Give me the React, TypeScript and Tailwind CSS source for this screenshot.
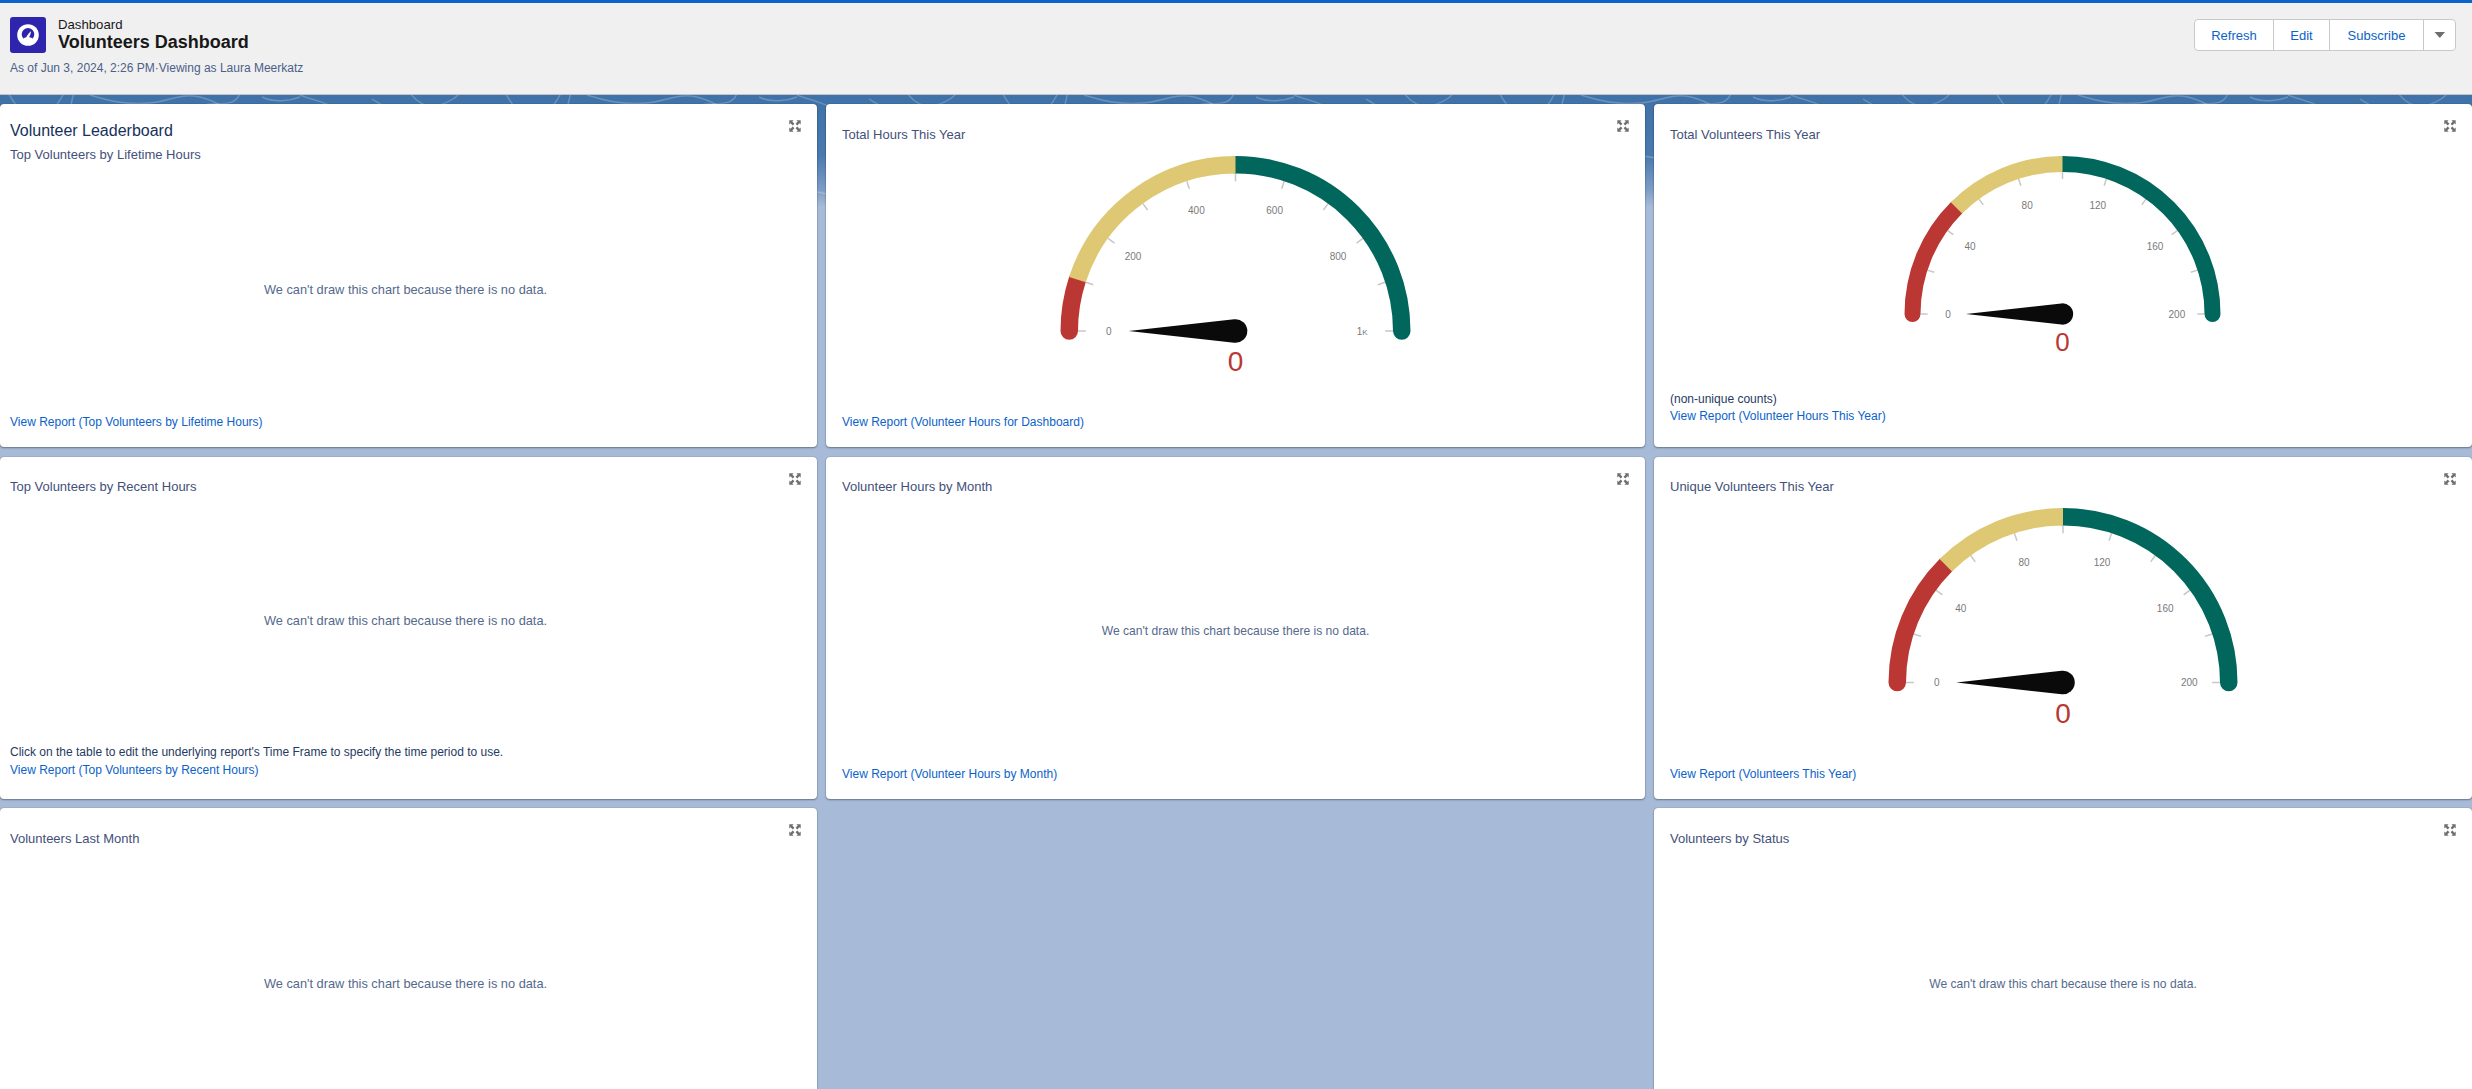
import React from "react";

const font = { fontFamily: '"Liberation Sans", Arial, sans-serif' };

function ExpandIcon() {
  const arrow = "M0.3 0.3H4.6L3.3 1.6L5.4 3.7L3.7 5.4L1.6 3.3L0.3 4.6Z";
  return (
    <svg viewBox="0 0 12 12" className="absolute top-[16px] right-[16px] w-[12px] h-[12px]">
      {[0, 90, 180, 270].map((r) => (
        <path key={r} d={arrow} fill="#6f6f6f" transform={`rotate(${r} 6 6)`} />
      ))}
    </svg>
  );
}

function pt(r: number, frac: number) {
  const a = Math.PI * (1 - frac);
  return [r * Math.cos(a), -r * Math.sin(a)];
}

function arc(r: number, f0: number, f1: number) {
  const [x0, y0] = pt(r, f0);
  const [x1, y1] = pt(r, f1);
  return `M${x0} ${y0}A${r} ${r} 0 0 1 ${x1} ${y1}`;
}

function Gauge({
  R,
  sw,
  split,
  labels,
  cy,
  valueY,
  valueSize,
  className,
}: {
  R: number;
  sw: number;
  split: number;
  labels: React.ReactNode[];
  cy: number;
  valueY: number;
  valueSize: number;
  className: string;
}) {
  const rc = R - sw / 2;
  const ri = R - sw;
  const W = 2 * (R + 12);
  const H = cy + valueY + 20;
  const L = R * 0.611;
  const nr = R * 0.0675;
  const tx = -(nr * nr) / L;
  const ty = nr * Math.sqrt(1 - (nr * nr) / (L * L));
  const tick = R * 0.045;
  return (
    <svg width={W} height={H} viewBox={`${-W / 2 + 0.5} ${-cy} ${W} ${H}`} className={className}>
      {Array.from({ length: 11 }).map((_, i) => {
        const [x0, y0] = pt(ri, i / 10);
        const [x1, y1] = pt(ri - tick, i / 10);
        return <line key={i} x1={x0} y1={y0} x2={x1} y2={y1} stroke="#c9c7c5" strokeWidth={1.5} />;
      })}
      <path d={arc(rc, 0, split)} fill="none" stroke="#ba3733" strokeWidth={sw} strokeLinecap="round" />
      <path d={arc(rc, 0.5, 1)} fill="none" stroke="#01675d" strokeWidth={sw} strokeLinecap="round" />
      <path d={arc(rc, split, 0.5)} fill="none" stroke="#dfc874" strokeWidth={sw} />
      {labels.map((l, i) => {
        const [x, y] = pt(R * 0.724, i / 5);
        return (
          <text key={i} x={x} y={y + 3.5} textAnchor="middle" fontSize={10} fill="#7a7a7a">
            {l}
          </text>
        );
      })}
      <path d={`M${-L} 0L${tx} ${-ty}A${nr} ${nr} 0 1 1 ${tx} ${ty}Z`} fill="#0a0a0a" />
      <text x={0} y={valueY + valueSize * 0.358} textAnchor="middle" fontSize={valueSize} fill="#ba3733">
        0
      </text>
    </svg>
  );
}

function Empty({ mt, big }: { mt: string; big?: boolean }) {
  return (
    <div className={`${mt} text-center leading-[18px] text-[#54698d] ${big ? "text-[12.8px]" : "text-[12.1px]"}`}>
      We can't draw this chart because there is no data.
    </div>
  );
}

function Card({
  title,
  sub,
  link,
  note,
  children,
  first,
  pb = "pb-[16px]",
}: {
  title?: string;
  sub?: React.ReactNode;
  link?: string;
  note?: React.ReactNode;
  children?: React.ReactNode;
  first?: boolean;
  pb?: string;
}) {
  return (
    <section
      className={`relative flex flex-col bg-white rounded-[4px] shadow-[0_1px_2px_rgba(0,0,0,0.35),0_0_1px_rgba(0,0,0,0.45)] ${pb} ${
        first ? "pl-[10px] pr-[16px]" : "px-[16px]"
      }`}
    >
      <ExpandIcon />
      {sub}
      {title && <h2 className="pt-[21.5px] leading-[18px] text-[#43507a] text-[13px]">{title}</h2>}
      {children}
      <div className="mt-auto">
        {note}
        {link && <a className="block leading-[18px] text-[#0b62c9] text-[12px]">{link}</a>}
      </div>
    </section>
  );
}

function Waves() {
  return (
    <svg className="absolute left-0 top-0 w-full h-[120px]" aria-hidden="true">
      <defs>
        <pattern id="w" width="497" height="120" patternUnits="userSpaceOnUse">
          <g fill="none" stroke="#ffffff" strokeOpacity="0.22" strokeWidth="1.4">
            <path d="M8 -2C12 4 14 8 18 12" />
            <path d="M55 12C60 6 62 2 64 -2" />
            <path d="M74 -2C72 3 72 8 70 12" />
            <path d="M90 0C110 6 125 10 150 8C170 6 180 -2 200 2C212 5 218 8 226 14" />
            <path d="M205 10C215 6 235 14 240 -2" />
            <path d="M262 2C275 8 290 6 300 2" />
            <path d="M300 0C316 6 330 8 340 16C350 40 358 70 330 112" />
            <path d="M372 4C382 10 390 18 430 24" />
            <path d="M410 -2C416 6 425 14 440 10C452 6 456 2 460 -2" />
            <path d="M60 40C110 65 160 55 220 75C280 95 310 90 370 110" />
            <path d="M0 95C40 85 80 104 130 100" />
          </g>
        </pattern>
      </defs>
      <rect width="100%" height="120" fill="url(#w)" />
    </svg>
  );
}

function DashIcon() {
  return (
    <div className="flex items-center justify-center w-[36px] h-[36px] rounded-[3px] bg-[#2f24ad] mr-[12px]">
      <svg width="24" height="24" viewBox="0 0 24 24">
        <circle cx="12" cy="12" r="10.8" fill="#ffffff" />
        <path d="M7.2 15.4A6.3 6.3 0 1 1 16.8 15.4C14.4 13.9 9.6 13.9 7.2 15.4Z" fill="#2f24ad" />
        <path d="M10.3 14.6C10.4 13 13.5 9.5 15 8.3C15 10.4 13.6 14 12.5 15.2C11.7 15.9 10.3 15.5 10.3 14.6Z" fill="#ffffff" />
      </svg>
    </div>
  );
}

function Btn({ children, w }: { children: React.ReactNode; w: string }) {
  return (
    <button className={`${w} h-full flex items-center justify-center border-r border-[#c9c9c9] last:border-r-0 text-[13px] text-[#0b62c9]`}>
      {children}
    </button>
  );
}

export default function App() {
  return (
    <div style={font} className="w-[2472px] h-[1089px] overflow-hidden flex flex-col bg-[#a7bbd8]">
      <header className="relative z-20 h-[95px] shrink-0 bg-[#f0f0f0] border-t-[3px] border-b border-t-[#0b63ce] border-b-[#c4c4c4] flex justify-between pl-[10px] pr-[16px]">
        <div className="pt-[13px]">
          <div className="flex items-center">
            <DashIcon />
            <div className="pt-[1px]">
              <div className="text-[13.2px] leading-[15px] text-[#181818]">Dashboard</div>
              <h1 className="text-[18px] leading-[21px] font-bold text-[#181818]">Volunteers Dashboard</h1>
            </div>
          </div>
          <div className="mt-[6px] text-[12px] leading-[18px] text-[#4b5f88]">As of Jun 3, 2024, 2:26 PM·Viewing as Laura Meerkatz</div>
        </div>
        <div className="mt-[16px] h-[32px] flex bg-white border border-[#c9c9c9] rounded-[4px]">
          <Btn w="w-[79px]">
            <span className="pt-[1px]">Refresh</span>
          </Btn>
          <Btn w="w-[56px]">
            <span className="pt-[1px]">Edit</span>
          </Btn>
          <Btn w="w-[94px]">
            <span className="pt-[1px]">Subscribe</span>
          </Btn>
          <Btn w="w-[31px]">
            <svg width="12" height="8" viewBox="0 0 12 8">
              <path d="M0.5 1H11L5.8 7Z" fill="#706e6b" />
            </svg>
          </Btn>
        </div>
      </header>
      <main className="relative flex-1 pt-[9px] bg-[linear-gradient(#3f72a8_0px,#4a79ae_60px,#7d9dc5_95px,#a7bbd8_112px,#a7bbd8_100%)]">
        <Waves />
        <div className="relative z-10 grid grid-cols-[817px_819px_818px] grid-rows-[343px_342px_343px] gap-x-[9px] gap-y-[9.5px]">
          <Card
            first
            link="View Report (Top Volunteers by Lifetime Hours)"
            sub={
              <div className="pt-[17px]">
                <h2 className="text-[16px] leading-[20px] text-[#16325c]">Volunteer Leaderboard</h2>
                <div className="mt-[5px] text-[13px] leading-[18px] text-[#43507a]">Top Volunteers by Lifetime Hours</div>
              </div>
            }
          >
            <Empty big mt="mt-[117px]" />
          </Card>
          <Card title="Total Hours This Year" link="View Report (Volunteer Hours for Dashboard)">
            <Gauge
              className="block mx-auto mt-[6.5px]"
              R={175}
              sw={17.5}
              split={0.1}
              cy={181}
              valueY={30}
              valueSize={28}
              labels={["0", "200", "400", "600", "800", <tspan key="k">1<tspan fontSize="8">K</tspan></tspan>]}
            />
          </Card>
          <Card
            title="Total Volunteers This Year"
            link="View Report (Volunteer Hours This Year)"
            pb="pb-[22px]"
            note={<div className="text-[12px] leading-[16px] text-[#1f3a63]">(non-unique counts)</div>}
          >
            <Gauge
              className="block mx-auto mt-[6.5px]"
              R={158}
              sw={16}
              split={0.25}
              cy={164}
              valueY={28}
              valueSize={26}
              labels={["0", "40", "80", "120", "160", "200"]}
            />
          </Card>

          <Card
            first
            title="Top Volunteers by Recent Hours"
            link="View Report (Top Volunteers by Recent Hours)"
            pb="pb-[20px]"
            note={<div className="text-[12px] leading-[18px] text-[#1f3a63]">Click on the table to edit the underlying report's Time Frame to specify the time period to use.</div>}
          >
            <Empty big mt="mt-[115.5px]" />
          </Card>
          <Card title="Volunteer Hours by Month" link="View Report (Volunteer Hours by Month)">
            <Empty mt="mt-[125.5px]" />
          </Card>
          <Card title="Unique Volunteers This Year" link="View Report (Volunteers This Year)">
            <Gauge
              className="block mx-auto mt-[6.5px]"
              R={174.5}
              sw={17.5}
              split={0.25}
              cy={179.5}
              valueY={30}
              valueSize={28}
              labels={["0", "40", "80", "120", "160", "200"]}
            />
          </Card>

          <Card first title="Volunteers Last Month">
            <Empty big mt="mt-[127.5px]" />
          </Card>
          <div />
          <Card title="Volunteers by Status">
            <Empty mt="mt-[127.5px]" />
          </Card>
        </div>
      </main>
    </div>
  );
}
